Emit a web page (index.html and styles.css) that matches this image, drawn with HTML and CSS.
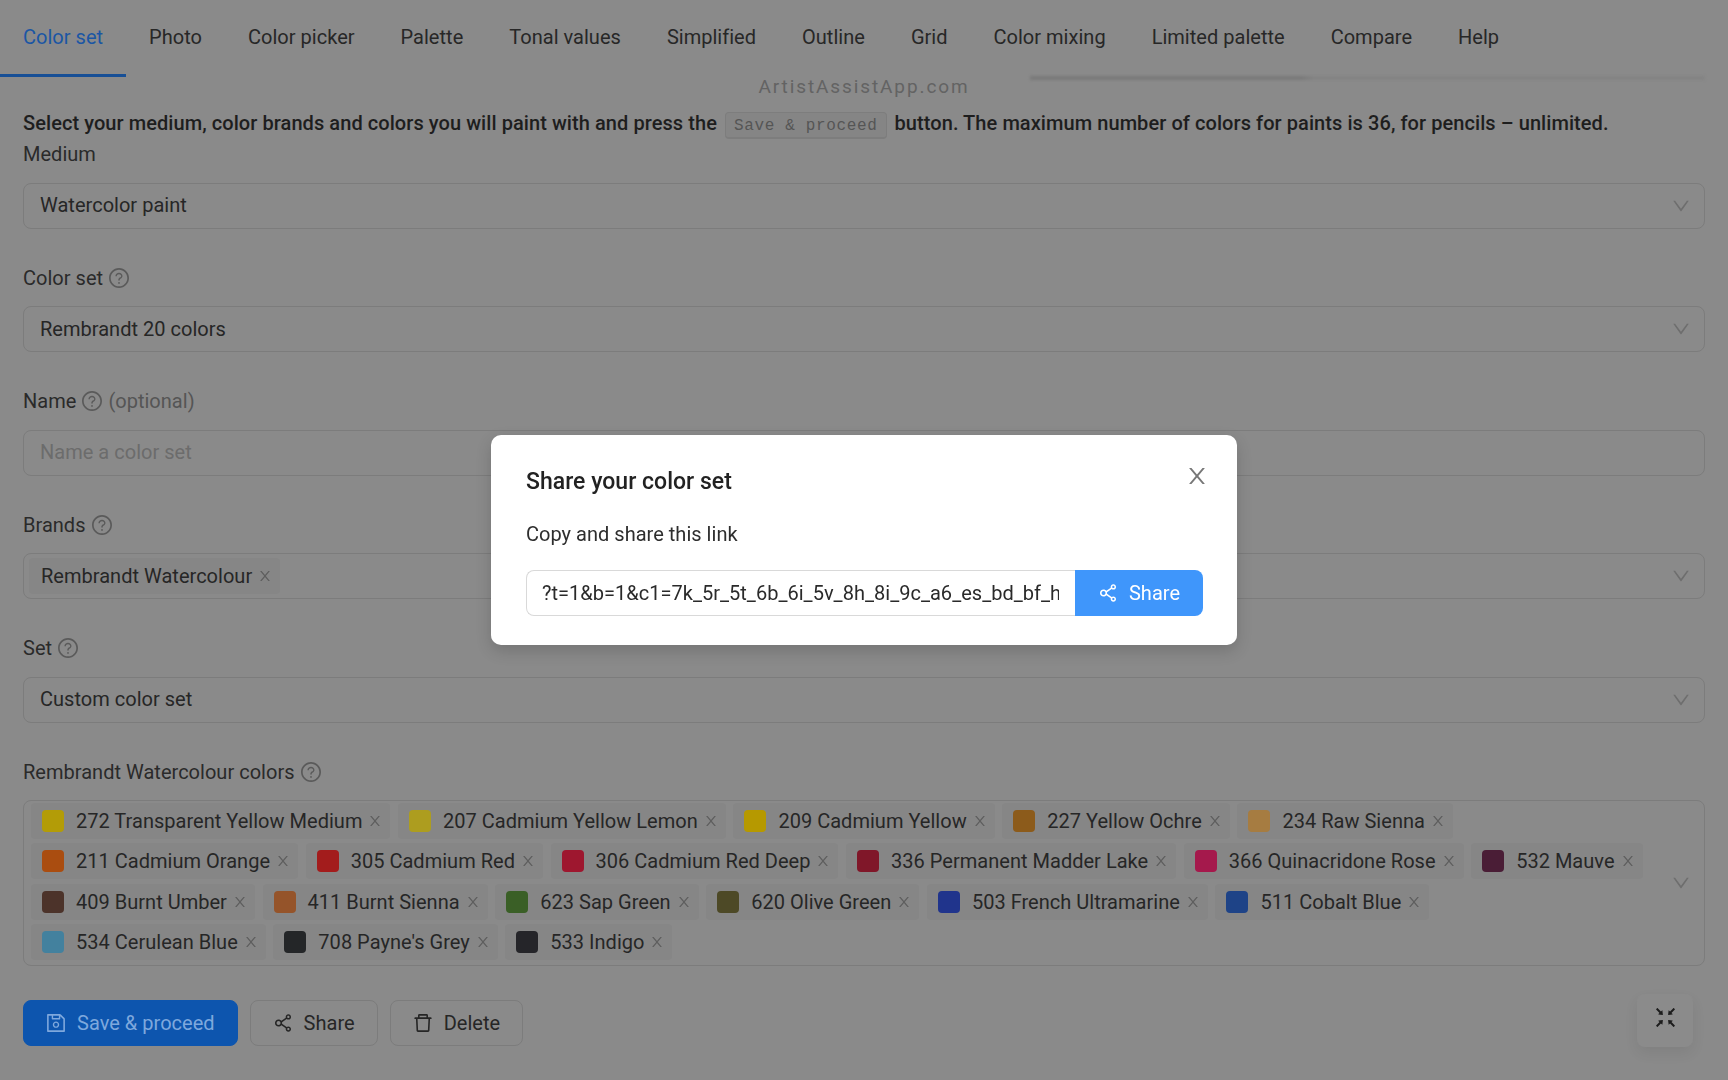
FILE: index.html
```html
<!DOCTYPE html>
<html lang="en">
<head>
<meta charset="utf-8">
<title>ArtistAssistApp</title>
<link rel="stylesheet" href="styles.css">
</head>
<body>
<svg class="sprite" aria-hidden="true">
  <symbol id="i-share" viewBox="64 64 896 896"><path d="M752 664c-28.5 0-54.8 10-75.4 26.7L469.4 540.8a160.68 160.68 0 000-57.6l207.2-149.9C697.2 350 723.5 360 752 360c66.2 0 120-53.8 120-120s-53.8-120-120-120-120 53.8-120 120c0 11.6 1.6 22.7 4.7 33.3L439.9 415.8C410.7 377.1 364.3 352 312 352c-88.4 0-160 71.6-160 160s71.6 160 160 160c52.3 0 98.7-25.1 127.9-63.8l196.8 142.5c-3.1 10.6-4.7 21.8-4.7 33.3 0 66.2 53.8 120 120 120s120-53.8 120-120-53.8-120-120-120zm0-476c28.7 0 52 23.3 52 52s-23.3 52-52 52-52-23.3-52-52 23.3-52 52-52zM312 600c-48.5 0-88-39.5-88-88s39.5-88 88-88 88 39.5 88 88-39.5 88-88 88zm440 236c-28.7 0-52-23.3-52-52s23.3-52 52-52 52 23.3 52 52-23.3 52-52 52z"/></symbol>
  <symbol id="i-delete" viewBox="64 64 896 896"><path d="M360 184h-8c4.4 0 8-3.6 8-8v8h304v-8c0 4.4 3.6 8 8 8h-8v72h72v-80c0-35.3-28.7-64-64-64H352c-35.3 0-64 28.7-64 64v80h72v-72zm504 72H160c-17.7 0-32 14.3-32 32v32c0 4.4 3.6 8 8 8h60.4l24.7 523c1.6 34.1 29.8 61 63.9 61h454c34.2 0 62.3-26.8 63.9-61l24.7-523H888c4.4 0 8-3.6 8-8v-32c0-17.7-14.3-32-32-32zM731.3 840H292.7l-24.2-512h487l-24.2 512z"/></symbol>
  <symbol id="i-save" viewBox="64 64 896 896"><path d="M893.3 293.3L730.7 130.7c-7.5-7.5-16.7-13-26.7-16V112H144c-17.7 0-32 14.3-32 32v736c0 17.7 14.3 32 32 32h736c17.7 0 32-14.3 32-32V338.5c0-17-6.7-33.2-18.7-45.2zM384 184h256v104H384V184zm456 656H184V184h136v136c0 17.7 14.3 32 32 32h320c17.7 0 32-14.3 32-32V205.8l136 136V840zM512 442c-79.5 0-144 64.5-144 144s64.5 144 144 144 144-64.5 144-144-64.5-144-144-144zm0 224c-44.2 0-80-35.8-80-80s35.8-80 80-80 80 35.8 80 80-35.8 80-80 80z"/></symbol>
  <symbol id="i-help" viewBox="64 64 896 896"><path d="M512 64C264.6 64 64 264.6 64 512s200.6 448 448 448 448-200.6 448-448S759.4 64 512 64zm0 820c-205.4 0-372-166.6-372-372s166.6-372 372-372 372 166.6 372 372-166.6 372-372 372z"/><path d="M623.6 316.7C593.6 290.4 554 276 512 276s-81.6 14.5-111.6 40.7C369.2 344 352 380.7 352 420v7.6c0 4.4 3.6 8 8 8h48c4.4 0 8-3.6 8-8V420c0-44.1 43.1-80 96-80s96 35.9 96 80c0 31.1-22 59.6-56.1 72.7-21.2 8.1-39.2 22.3-52.1 40.9-13.1 19-19.9 41.8-19.9 65.9V620c0 4.4 3.6 8 8 8h48c4.4 0 8-3.6 8-8v-20.5c0-23.3 14.1-44.3 36-53.1 53-20.6 88-68.6 88-119.7 0-37.3-17.1-73.9-48.3-103z"/><path d="M472 732a40 40 0 1080 0 40 40 0 10-80 0z"/></symbol>
  <symbol id="i-close" viewBox="64 64 896 896"><path d="M563.8 512l262.5-312.9c4.4-5.2.7-13.1-6.1-13.1h-79.8c-4.7 0-9.2 2.1-12.3 5.7L511.6 449.8 295.1 191.7c-3-3.6-7.5-5.7-12.3-5.7H203c-6.8 0-10.5 7.9-6.1 13.1L459.4 512 196.9 824.9A7.95 7.95 0 00203 838h79.8c4.7 0 9.2-2.1 12.3-5.7l216.5-258.1 216.5 258.1c3 3.6 7.5 5.7 12.3 5.7h79.8c6.8 0 10.5-7.9 6.1-13.1L563.8 512z"/></symbol>
  <symbol id="i-down" viewBox="64 64 896 896"><path d="M884 256h-75c-5.1 0-9.9 2.5-12.9 6.6L512 654.2 227.9 262.6c-3-4.1-7.8-6.6-12.9-6.6h-75c-6.5 0-10.3 7.4-6.5 12.7l352.6 486.1c12.8 17.6 39 17.6 51.7 0l352.6-486.1c3.9-5.3.1-12.7-6.4-12.7z"/></symbol>
  <symbol id="i-exit" viewBox="64 64 896 896"><path d="M391 240.9c-.8-6.6-8.9-9.4-13.6-4.7l-43.7 43.7L200 146.3a8.03 8.03 0 00-11.3 0l-42.4 42.3a8.03 8.03 0 000 11.3L280 333.6l-43.9 43.9a8.01 8.01 0 004.7 13.6L401 410c5.1.6 9.5-3.7 8.9-8.9L391 240.9zm10.1 373.2L240.8 633c-6.6.8-9.4 8.9-4.7 13.6l43.9 43.9L146.3 824a8.03 8.03 0 000 11.3l42.4 42.3c3.1 3.1 8.2 3.1 11.3 0L333.7 744l43.7 43.7A8.01 8.01 0 00391 783l18.9-160.1c.6-5.1-3.7-9.4-8.8-8.8zm221.8-204.2L783.2 391c6.6-.8 9.4-8.9 4.7-13.6L744 333.6 877.7 200c3.1-3.1 3.1-8.2 0-11.3l-42.4-42.3a8.03 8.03 0 00-11.3 0L690.3 279.9l-43.7-43.7a8.01 8.01 0 00-13.6 4.7L614.1 401c-.6 5.2 3.7 9.5 8.8 8.9zM744 690.4l43.9-43.9a8.01 8.01 0 00-4.7-13.6L623 614c-5.1-.6-9.5 3.7-8.9 8.9L633 783.1c.8 6.6 8.9 9.4 13.6 4.7l43.7-43.7L824 877.7c3.1 3.1 8.2 3.1 11.3 0l42.4-42.3c3.1-3.1 3.1-8.2 0-11.3L744 690.4z"/></symbol>
</svg>

<nav class="tabs">
  <a class="tab tab-active">Color set</a>
  <a class="tab">Photo</a>
  <a class="tab">Color picker</a>
  <a class="tab">Palette</a>
  <a class="tab">Tonal values</a>
  <a class="tab">Simplified</a>
  <a class="tab">Outline</a>
  <a class="tab">Grid</a>
  <a class="tab">Color mixing</a>
  <a class="tab">Limited palette</a>
  <a class="tab">Compare</a>
  <a class="tab">Help</a>
</nav>
<div class="watermark">ArtistAssistApp.com</div>
<div class="tab-shadow"></div>

<main class="content">
  <p class="intro">Select your medium, color brands and colors you will paint with and press the <kbd class="kbd">Save &amp; proceed</kbd> button. The maximum number of colors for paints is 36, for pencils – unlimited.</p>

  <section class="field">
    <div class="label">Medium</div>
    <div class="control"><span class="value">Watercolor paint</span><svg class="chev"><use href="#i-down"/></svg></div>
  </section>

  <section class="field">
    <div class="label">Color set <svg class="help"><use href="#i-help"/></svg></div>
    <div class="control"><span class="value">Rembrandt 20 colors</span><svg class="chev"><use href="#i-down"/></svg></div>
  </section>

  <section class="field">
    <div class="label">Name <svg class="help"><use href="#i-help"/></svg> <span class="optional">(optional)</span></div>
    <div class="control"><span class="value placeholder">Name a color set</span></div>
  </section>

  <section class="field">
    <div class="label">Brands <svg class="help"><use href="#i-help"/></svg></div>
    <div class="control control-tags">
      <span class="chip chip-brand">Rembrandt Watercolour<svg class="chip-x"><use href="#i-close"/></svg></span>
      <svg class="chev"><use href="#i-down"/></svg>
    </div>
  </section>

  <section class="field">
    <div class="label">Set <svg class="help"><use href="#i-help"/></svg></div>
    <div class="control"><span class="value">Custom color set</span><svg class="chev"><use href="#i-down"/></svg></div>
  </section>

  <section class="field field-colors">
    <div class="label">Rembrandt Watercolour colors <svg class="help"><use href="#i-help"/></svg></div>
    <div class="control control-colors">
      <div class="rows">
        <div class="row">
          <span class="chip"><i class="sw sw-272"></i>272 Transparent Yellow Medium<svg class="chip-x"><use href="#i-close"/></svg></span>
          <span class="chip"><i class="sw sw-207"></i>207 Cadmium Yellow Lemon<svg class="chip-x"><use href="#i-close"/></svg></span>
          <span class="chip"><i class="sw sw-209"></i>209 Cadmium Yellow<svg class="chip-x"><use href="#i-close"/></svg></span>
          <span class="chip"><i class="sw sw-227"></i>227 Yellow Ochre<svg class="chip-x"><use href="#i-close"/></svg></span>
          <span class="chip"><i class="sw sw-234"></i>234 Raw Sienna<svg class="chip-x"><use href="#i-close"/></svg></span>
        </div>
        <div class="row">
          <span class="chip"><i class="sw sw-211"></i>211 Cadmium Orange<svg class="chip-x"><use href="#i-close"/></svg></span>
          <span class="chip"><i class="sw sw-305"></i>305 Cadmium Red<svg class="chip-x"><use href="#i-close"/></svg></span>
          <span class="chip"><i class="sw sw-306"></i>306 Cadmium Red Deep<svg class="chip-x"><use href="#i-close"/></svg></span>
          <span class="chip"><i class="sw sw-336"></i>336 Permanent Madder Lake<svg class="chip-x"><use href="#i-close"/></svg></span>
          <span class="chip"><i class="sw sw-366"></i>366 Quinacridone Rose<svg class="chip-x"><use href="#i-close"/></svg></span>
          <span class="chip"><i class="sw sw-532"></i>532 Mauve<svg class="chip-x"><use href="#i-close"/></svg></span>
        </div>
        <div class="row">
          <span class="chip"><i class="sw sw-409"></i>409 Burnt Umber<svg class="chip-x"><use href="#i-close"/></svg></span>
          <span class="chip"><i class="sw sw-411"></i>411 Burnt Sienna<svg class="chip-x"><use href="#i-close"/></svg></span>
          <span class="chip"><i class="sw sw-623"></i>623 Sap Green<svg class="chip-x"><use href="#i-close"/></svg></span>
          <span class="chip"><i class="sw sw-620"></i>620 Olive Green<svg class="chip-x"><use href="#i-close"/></svg></span>
          <span class="chip"><i class="sw sw-503"></i>503 French Ultramarine<svg class="chip-x"><use href="#i-close"/></svg></span>
          <span class="chip"><i class="sw sw-511"></i>511 Cobalt Blue<svg class="chip-x"><use href="#i-close"/></svg></span>
        </div>
        <div class="row">
          <span class="chip"><i class="sw sw-534"></i>534 Cerulean Blue<svg class="chip-x"><use href="#i-close"/></svg></span>
          <span class="chip"><i class="sw sw-708"></i>708 Payne's Grey<svg class="chip-x"><use href="#i-close"/></svg></span>
          <span class="chip"><i class="sw sw-533"></i>533 Indigo<svg class="chip-x"><use href="#i-close"/></svg></span>
        </div>
      </div>
      <svg class="chev"><use href="#i-down"/></svg>
    </div>
  </section>

  <div class="actions">
    <button class="btn btn-primary"><svg class="btn-icon"><use href="#i-save"/></svg>Save &amp; proceed</button>
    <button class="btn"><svg class="btn-icon"><use href="#i-share"/></svg>Share</button>
    <button class="btn"><svg class="btn-icon"><use href="#i-delete"/></svg>Delete</button>
  </div>
</main>

<button class="float-btn" aria-label="Exit fullscreen"><svg class="float-icon"><use href="#i-exit"/></svg></button>

<div class="mask">
  <div class="modal" role="dialog">
    <svg class="modal-close"><use href="#i-close"/></svg>
    <h2 class="modal-title">Share your color set</h2>
    <p class="modal-text">Copy and share this link</p>
    <div class="link-group">
      <input class="link-input" readonly value="?t=1&amp;b=1&amp;c1=7k_5r_5t_6b_6i_5v_8h_8i_9c_a6_es_bd_bf_hk_ia_lp_nk_o3_q8_qa_qz_rl_rs">
      <button class="link-btn"><svg class="btn-icon"><use href="#i-share"/></svg>Share</button>
    </div>
  </div>
</div>
</body>
</html>
```
FILE: styles.css
```css
* { box-sizing: border-box; }
html, body { margin: 0; height: 100%; }
body {
  background: #8a8a8a;
  color: #222;
  font-family: Roboto, "Liberation Sans", sans-serif;
  font-size: 20px;
  line-height: 28px;
  letter-spacing: .02px;
  overflow: hidden;
}
.sprite { display: none; }
svg { fill: currentColor; }

.tabs {
  display: flex;
  height: 77px;
  align-items: center;
}
.tab {
  display: flex;
  align-items: center;
  height: 77px;
  padding: 0 23px;
  border-bottom: 3px solid transparent;
  color: #272727;
  white-space: nowrap;
}
.tab-active { color: #1b56a4; border-bottom-color: #174f96; }
.watermark {
  position: absolute;
  left: 0;
  right: 0;
  top: 73px;
  text-align: center;
  color: #636363;
  font-size: 19px;
  letter-spacing: 1.9px;
}
.tab-shadow {
  position: absolute;
  left: 1030px;
  top: 76px;
  width: 675px;
  height: 4px;
  background: linear-gradient(90deg, #797979 0, #797979 40%, #838383 42%, #838383 100%);
  filter: blur(1.5px);
}

.content { padding: 30px 23px 0; }
.intro {
  margin: 0 0 1.6px;
  height: 32px;
  line-height: 32px;
  font-weight: 500;
  letter-spacing: .07px;
  color: #1e1e1e;
  white-space: nowrap;
}
.kbd {
  display: inline-block;
  height: 27px;
  padding: 0 8px;
  margin: 0 3px;
  font-family: "Liberation Mono", monospace;
  font-size: 16px;
  font-weight: 400;
  line-height: 27px;
  letter-spacing: .65px;
  color: #555;
  background: #858585;
  border: 1px solid #7d7d7d;
  border-bottom-width: 2px;
  border-radius: 4px;
}

.field { margin-bottom: 35.5px; }
.label {
  display: flex;
  align-items: center;
  gap: 6px;
  height: 28px;
  padding-bottom: 1px;
  margin-bottom: 14px;
  color: #2a2a2a;
}
.help { width: 20px; height: 20px; color: #5a5a5a; }
.optional { color: #555; }

.control {
  position: relative;
  display: flex;
  align-items: center;
  height: 46px;
  padding: 0 16px 1px;
  border: 1px solid #7c7c7c;
  border-radius: 8px;
}
.value { color: #262626; }
.placeholder { color: #6c6c6c; }
.chev {
  position: absolute;
  right: 14px;
  top: 50%;
  width: 18px;
  height: 18px;
  margin-top: -9px;
  color: #6e6e6e;
}
.control-tags { padding: 0 5px 1px; }

.chip {
  display: inline-flex;
  align-items: center;
  height: 36px;
  padding: 0 8px;
  background: #868686;
  border-radius: 4px;
  color: #262626;
  white-space: nowrap;
}
.chip-brand { padding: 0 8px 0 12px; }
.chip-x { width: 14px; height: 14px; margin-left: 6px; color: #5e5e5e; }

.control-colors { height: 166px; padding: 2px 7px; align-items: flex-start; }
.rows { display: flex; flex-direction: column; gap: 4.3px; }
.row { display: flex; gap: 7.6px; }
.sw { width: 22px; height: 22px; margin: 0 12px 0 3px; border-radius: 4px; }
.sw-272 { background: #b39c07; }
.sw-207 { background: #ad9d1f; }
.sw-209 { background: #b69900; }
.sw-227 { background: #8c5b1b; }
.sw-234 { background: #a67c41; }
.sw-211 { background: #aa4d10; }
.sw-305 { background: #a31c1c; }
.sw-306 { background: #9e172f; }
.sw-336 { background: #801729; }
.sw-366 { background: #a5194c; }
.sw-532 { background: #4a1d36; }
.sw-409 { background: #4c332a; }
.sw-411 { background: #95542a; }
.sw-623 { background: #3a5f26; }
.sw-620 { background: #4d4926; }
.sw-503 { background: #20348c; }
.sw-511 { background: #1e4387; }
.sw-534 { background: #43819e; }
.sw-708 { background: #242628; }
.sw-533 { background: #252529; }

.actions { display: flex; gap: 12px; margin-top: -1.5px; }
.btn {
  display: inline-flex;
  align-items: center;
  gap: 11px;
  height: 46px;
  padding: 0 22px;
  border: 1px solid #7c7c7c;
  border-radius: 8px;
  background: transparent;
  color: #262626;
  font: inherit;
  letter-spacing: inherit;
}
.btn-primary { background: #0d55ae; border-color: #0d55ae; color: #7ea8dd; }
.btn-icon { width: 20px; height: 20px; }
.float-btn {
  position: fixed;
  left: 1637px;
  top: 994px;
  width: 56px;
  height: 53px;
  padding: 0 0 7px;
  border: 0;
  border-radius: 8px;
  background: #8b8b8b;
  box-shadow: 0 6px 14px rgba(0,0,0,.07);
  color: #1c1c1c;
  display: flex;
  align-items: center;
  justify-content: center;
}
.float-icon { width: 23px; height: 23px; }

.mask {
  position: fixed;
  inset: 0;
  display: flex;
  align-items: center;
  justify-content: center;
}
.modal {
  position: relative;
  width: 746px;
  height: 210px;
  padding: 29px 34px 28px 35px;
  background: #fff;
  border-radius: 10px;
  box-shadow: 0 6px 16px rgba(0,0,0,.16);
}
.modal-close {
  position: absolute;
  right: 29px;
  top: 30px;
  width: 22px;
  height: 22px;
  color: #777;
}
.modal-title {
  margin: 0 0 20px;
  font-size: 23px;
  line-height: 36px;
  font-weight: 500;
  color: #222;
}
.modal-text { margin: 0 0 22px; line-height: 28px; color: #2e2e2e; }
.link-group { display: flex; height: 46px; }
.link-input {
  flex: 1;
  min-width: 0;
  padding: 0 16px 0 15px;
  border: 1px solid #d9d9d9;
  border-right: 0;
  border-radius: 8px 0 0 8px;
  font: inherit;
  letter-spacing: inherit;
  color: #2a2a2a;
  outline: none;
}
.link-btn {
  display: inline-flex;
  align-items: center;
  gap: 11px;
  width: 128px;
  justify-content: center;
  border: 0;
  border-radius: 0 8px 8px 0;
  background: #3f96fb;
  color: #fff;
  font: inherit;
  letter-spacing: inherit;
}
```
